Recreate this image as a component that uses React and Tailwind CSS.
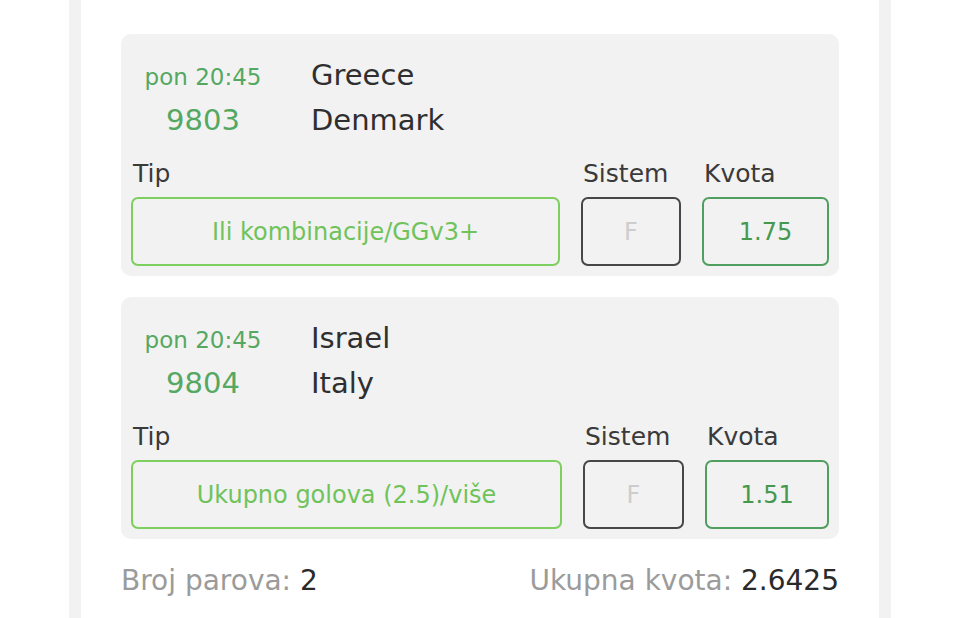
const font = { fontFamily: '"DejaVu Sans", sans-serif' };

const pairs = [
  {
    id: 9803,
    time: 'pon 20:45',
    home: 'Greece',
    away: 'Denmark',
    tip: 'Ili kombinacije/GGv3+',
    odds: '1.75',
    sistemW: 'w-[100px]',
    kvotaW: 'w-[127px]',
  },
  {
    id: 9804,
    time: 'pon 20:45',
    home: 'Israel',
    away: 'Italy',
    tip: 'Ukupno golova (2.5)/više',
    odds: '1.51',
    sistemW: 'w-[101px]',
    kvotaW: 'w-[124px]',
  },
];

function PairCard({ pair }) {
  return (
    <div className="rounded-[10px] bg-[#f2f2f2] px-[10px] pt-[20px] pb-[10px]">
      {/* Match info */}
      <div className="flex items-baseline leading-[43px]">
        <span className="w-[144px] text-center text-[23px] text-[#55a862]">{pair.time}</span>
        <span className="ml-[36px] text-[29px] text-[#2f2f2f]">{pair.home}</span>
      </div>
      <div className="flex items-baseline leading-[43px]">
        <span className="w-[144px] text-center text-[29px] text-[#55a862]">{pair.id}</span>
        <span className="ml-[36px] text-[29px] text-[#2f2f2f]">{pair.away}</span>
      </div>

      {/* Tip / Sistem / Kvota */}
      <div className="mt-[17px] flex gap-[21px]">
        <div className="flex min-w-0 flex-1 flex-col">
          <span className="pl-[2px] text-[25px] leading-[30px] text-[#3a3a3a]">Tip</span>
          <div className="mt-[8px] flex h-[69px] items-center justify-center rounded-[7px] border-2 border-[#7dcf5f] text-[24px] text-[#6fc35a]">
            {pair.tip}
          </div>
        </div>
        <div className={`flex flex-col ${pair.sistemW}`}>
          <span className="pl-[2px] text-[25px] leading-[30px] text-[#3a3a3a]">Sistem</span>
          <div className="mt-[8px] flex h-[69px] items-center justify-center rounded-[7px] border-2 border-[#474747] text-[24px] text-[#cdcdcd]">
            F
          </div>
        </div>
        <div className={`flex flex-col ${pair.kvotaW}`}>
          <span className="pl-[2px] text-[25px] leading-[30px] text-[#3a3a3a]">Kvota</span>
          <div className="mt-[8px] flex h-[69px] items-center justify-center rounded-[7px] border-2 border-[#519f60] text-[24px] text-[#45994f]">
            {pair.odds}
          </div>
        </div>
      </div>
    </div>
  );
}

export default function App() {
  return (
    <div className="flex h-[618px] w-[960px] overflow-hidden bg-white" style={font}>
      <div className="w-[69px] shrink-0" />
      <div className="w-[12px] shrink-0 bg-[#f2f2f2]" />

      <div className="flex w-[798px] shrink-0 flex-col px-[40px] pt-[34px]">
        <div className="flex flex-col gap-[21px]">
          {pairs.map((p) => (
            <PairCard key={p.id} pair={p} />
          ))}
        </div>

        <div className="mt-[25px] flex justify-between text-[28px] leading-[34px]">
          <span className="text-[#9b9b9b]">
            Broj parova: <span className="text-[#2a2a2a]">2</span>
          </span>
          <span className="text-[#9b9b9b]">
            Ukupna kvota: <span className="text-[#2a2a2a]">2.6425</span>
          </span>
        </div>
      </div>

      <div className="w-[12px] shrink-0 bg-[#f2f2f2]" />
      <div className="flex-1" />
    </div>
  );
}
